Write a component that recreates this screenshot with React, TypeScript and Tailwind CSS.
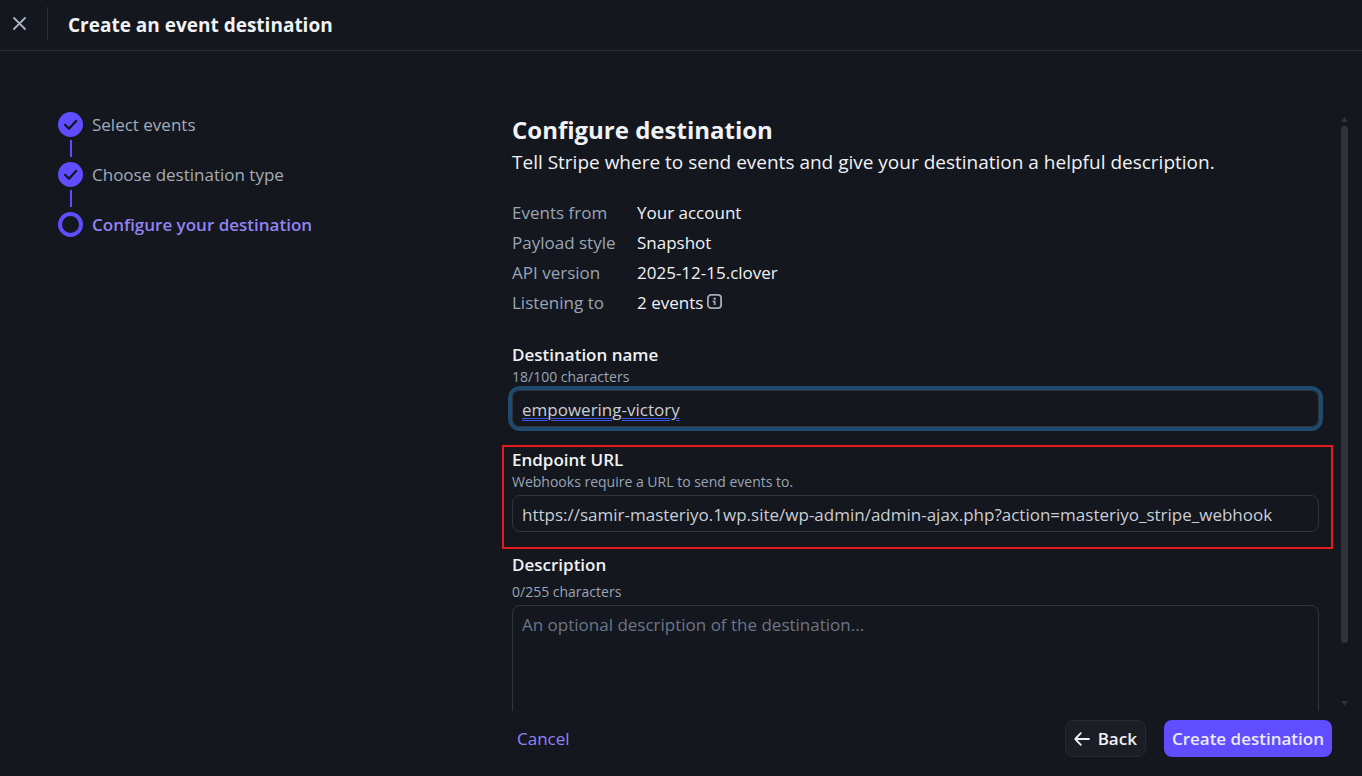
import { useState } from "react";
import type { ReactNode } from "react";

const steps = [
  { label: "Select events", done: true },
  { label: "Choose destination type", done: true },
  { label: "Configure your destination", done: false },
];

const details = [
  { term: "Events from", value: "Your account" },
  { term: "Payload style", value: "Snapshot" },
  { term: "API version", value: "2025-12-15.clover" },
  { term: "Listening to", value: "2 events", info: true },
];

function CloseIcon() {
  return (
    <svg className="h-[13px] w-[13px]" viewBox="0 0 13 13" fill="none" stroke="currentColor" strokeWidth="1.8" strokeLinecap="round">
      <path d="M1 1l11 11M12 1L1 12" />
    </svg>
  );
}

function InfoIcon() {
  return (
    <svg className="mb-[3px] h-[15px] w-[15px] text-[#a3acba]" viewBox="0 0 15 15" fill="none" stroke="currentColor">
      <rect x="0.9" y="0.9" width="13.2" height="13.2" rx="3.2" strokeWidth="1.8" />
      <circle cx="7.6" cy="4.7" r="1.2" fill="currentColor" stroke="none" />
      <path d="M5.6 7.5h2.1v3.5" strokeWidth="1.7" />
    </svg>
  );
}

function ArrowLeftIcon() {
  return (
    <svg className="h-[14px] w-[16px]" viewBox="0 0 16 14" fill="none" stroke="currentColor" strokeWidth="1.8" strokeLinecap="round" strokeLinejoin="round">
      <path d="M15 7H1.2M6.8 1.2L1.2 7l5.6 5.8" />
    </svg>
  );
}

function StepMarker({ done }: { done: boolean }) {
  if (!done) {
    return <span className="h-[25px] w-[25px] rounded-full border-4 border-[#5f4dff]" />;
  }
  return (
    <svg className="h-[25px] w-[25px]" viewBox="0 0 25 25" fill="none">
      <circle cx="12.5" cy="12.5" r="12.5" fill="#5f4dff" />
      <path d="M7 12.8l4 4 7.3-8" stroke="#14171d" strokeWidth="2.2" strokeLinecap="round" strokeLinejoin="round" />
    </svg>
  );
}

function FieldLabel({ htmlFor, children }: { htmlFor: string; children: ReactNode }) {
  return (
    <label htmlFor={htmlFor} className="block text-[17px] leading-[22px] font-semibold text-[#f0f2f5]">
      {children}
    </label>
  );
}

export default function App() {
  const [name, setName] = useState("empowering-victory");
  const [url, setUrl] = useState("https://samir-masteriyo.1wp.site/wp-admin/admin-ajax.php?action=masteriyo_stripe_webhook");
  const [description, setDescription] = useState("");

  return (
    <div className="flex h-screen flex-col bg-[#14171d] font-['Open_Sans',sans-serif] text-[17px] text-[#f0f2f5]">
      <header className="flex h-[51px] shrink-0 items-start border-b border-[#2b2e35] pt-[7px]">
        <button type="button" aria-label="Close" className="flex h-8 w-[47px] items-center pl-[13px] text-[#a9b2c0]">
          <CloseIcon />
        </button>
        <div className="h-[33px] border-l border-[#2b2e35]" />
        <h1 className="pl-5 text-[19px] leading-9 font-bold">Create an event destination</h1>
      </header>

      <div className="flex min-h-0 flex-1">
        <aside className="w-[500px] shrink-0 pt-[61px] pl-[58px]">
          <ol>
            {steps.map((step, i) => (
              <li key={step.label} className="flex gap-[9px]">
                <div className="flex w-[25px] flex-col items-center">
                  <StepMarker done={step.done} />
                  {i < steps.length - 1 && <span className="mt-[3px] mb-[5px] h-[17px] w-[2px] bg-[#5f4dff]" />}
                </div>
                <span className={step.done ? "leading-[25px] text-[#a3acba]" : "leading-[25px] font-semibold text-[#9183f5]"}>
                  {step.label}
                </span>
              </li>
            ))}
          </ol>
        </aside>

        <main className="flex min-w-0 flex-1 flex-col">
          <div className="flex min-h-0 flex-1">
            <div className="min-w-0 flex-1 overflow-hidden pt-[63px] pr-[22px] pl-3">
              <h2 className="text-2xl font-bold">Configure destination</h2>
              <p className="mt-[2px] text-[19px] leading-7">
                Tell Stripe where to send events and give your destination a helpful description.
              </p>

              <dl className="mt-[22px] grid grid-cols-[125px_1fr] leading-[30px]">
                {details.map((row) => (
                  <div key={row.term} className="contents">
                    <dt className="text-[#99a5b8]">{row.term}</dt>
                    <dd className="flex items-center gap-1">
                      {row.value}
                      {row.info && <InfoIcon />}
                    </dd>
                  </div>
                ))}
              </dl>

              <form id="destination" className="mt-[26px] flex flex-col gap-[22px]">
                <div>
                  <FieldLabel htmlFor="name">Destination name</FieldLabel>
                  <p className="text-sm leading-[22px] text-[#99a5b8]">18/100 characters</p>
                  <input
                    id="name"
                    value={name}
                    spellCheck={false}
                    onChange={(e) => setName(e.target.value)}
                    className="mt-[2px] block h-[37px] w-full rounded-lg border border-[#30343b] px-[9px] pt-[2px] text-[#c9ced8] underline decoration-[#3d55e8] decoration-double decoration-1 underline-offset-2 ring-4 ring-[#1f4b70] outline-none"
                  />
                </div>

                <div className="relative">
                  <FieldLabel htmlFor="url">Endpoint URL</FieldLabel>
                  <p className="text-sm leading-[22px] text-[#99a5b8]">Webhooks require a URL to send events to.</p>
                  <input
                    id="url"
                    value={url}
                    onChange={(e) => setUrl(e.target.value)}
                    className="mt-[2px] block h-[37px] w-full rounded-lg border border-[#30343b] px-[9px] pt-[2px] text-[#c9ced8] outline-none"
                  />
                  <div className="pointer-events-none absolute -top-[4px] -right-[14px] -bottom-[17px] -left-[10px] border-2 border-[#e51c1f]" />
                </div>

                <div>
                  <FieldLabel htmlFor="description">Description</FieldLabel>
                  <p className="mt-[5px] text-sm leading-[22px] text-[#99a5b8]">0/255 characters</p>
                  <textarea
                    id="description"
                    rows={5}
                    value={description}
                    placeholder="An optional description of the destination..."
                    onChange={(e) => setDescription(e.target.value)}
                    className="mt-[2px] block w-full resize-none rounded-lg border border-[#30343b] px-[9px] py-[6px] leading-[25px] outline-none placeholder:text-[#6c7688]"
                  />
                </div>
              </form>
            </div>

            {/* scroll track */}
            <div className="mr-[14px] flex w-[7px] shrink-0 flex-col items-center pt-[66px] pb-[5px]">
              <svg className="h-[5px] w-[7px]" viewBox="0 0 7 5" fill="#30333b">
                <path d="M3.5 0L7 5H0z" />
              </svg>
              <div className="mt-1 mb-[58px] w-full flex-1 rounded-full bg-[#30333b]" />
              <svg className="h-[5px] w-[7px]" viewBox="0 0 7 5" fill="#30333b">
                <path d="M3.5 5L7 0H0z" />
              </svg>
            </div>
          </div>

          <footer className="flex h-[65px] shrink-0 items-start pt-[9px] pr-[30px] pl-[17px]">
            <button type="button" className="h-[37px] text-[#9183f5]">
              Cancel
            </button>
            <button
              type="button"
              className="ml-auto flex h-[37px] items-center gap-2 rounded-lg border border-[#272a31] bg-[#1b1e25] px-2 font-semibold"
            >
              <ArrowLeftIcon />
              Back
            </button>
            <button type="submit" form="destination" className="ml-[18px] h-[37px] rounded-lg bg-[#5f4dff] px-2 font-semibold text-[#eceaff]">
              Create destination
            </button>
          </footer>
        </main>
      </div>
    </div>
  );
}
